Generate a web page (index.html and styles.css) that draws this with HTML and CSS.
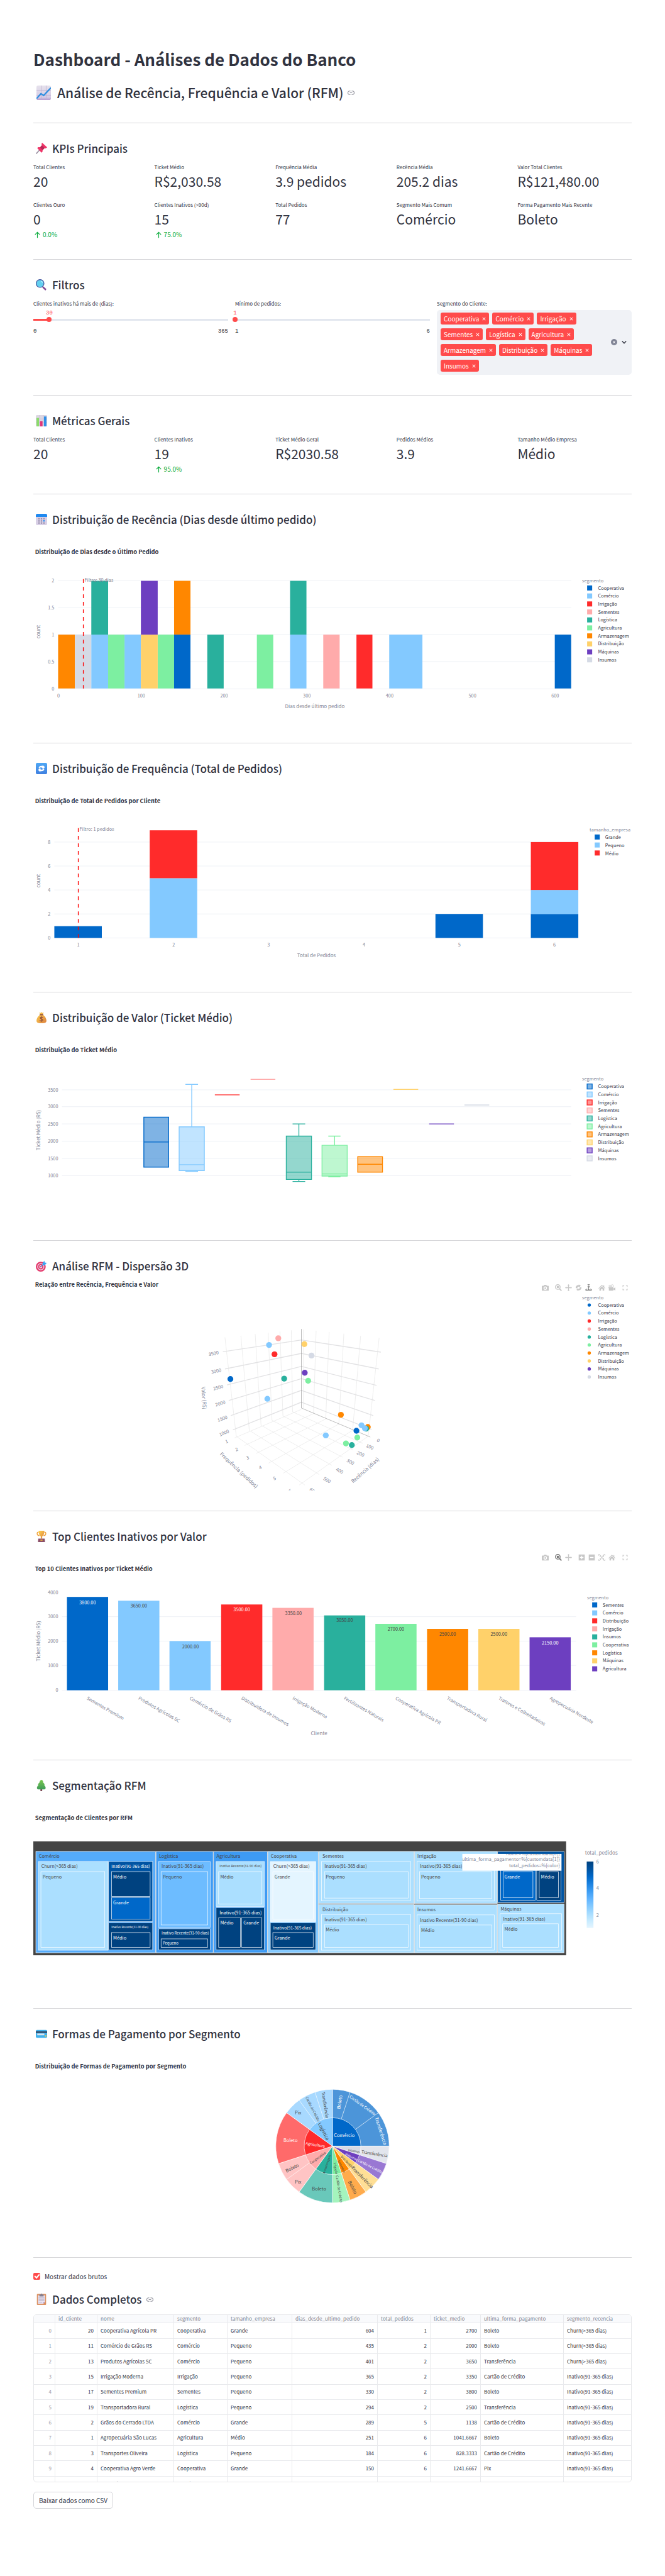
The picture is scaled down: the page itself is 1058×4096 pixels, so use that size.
FILE: index.html
```html
<!DOCTYPE html>
<html lang="pt-BR">
<head>
<meta charset="utf-8">
<meta name="viewport" content="width=device-width, initial-scale=1">
<title>Dashboard - Análises de Dados do Banco</title>
<link rel="stylesheet" href="styles.css">
</head>
<body>
<svg class="defs" aria-hidden="true">
  <defs>
    <symbol id="i-link" viewBox="0 0 24 24"><path d="M10 6H7a6 6 0 0 0 0 12h3M14 6h3a6 6 0 0 1 0 12h-3M8 12h8" fill="none" stroke="currentColor" stroke-width="2.4"/></symbol>
    <symbol id="i-x" viewBox="0 0 8 8"><path d="M1 1l6 6M7 1L1 7" stroke="currentColor" stroke-width="1.4" fill="none"/></symbol>
    <symbol id="i-up" viewBox="0 0 16 16"><path d="M8 15V2M2.500 7.500L8 2l5.500 5.500" stroke="currentColor" stroke-width="1.700" fill="none"/></symbol>
    <symbol id="i-camera" viewBox="0 0 16 16"><path fill-rule="evenodd" d="M1 3.500h3.500L5.500 1.500h5l1 2H15a1 1 0 0 1 1 1V14a1 1 0 0 1-1 1H1a1 1 0 0 1-1-1V4.500a1 1 0 0 1 1-1zM8 5.200a4 4 0 1 0 0 8 4 4 0 0 0 0-8zM8 7.200a2 2 0 1 1 0 4 2 2 0 0 1 0-4z" fill="currentColor"/></symbol>
    <symbol id="i-zoom" viewBox="0 0 16 16"><circle cx="6.500" cy="6.500" r="5.300" fill="none" stroke="currentColor" stroke-width="2.200"/><rect x="4.300" y="4.300" width="4.400" height="4.400" fill="currentColor"/><path d="M10.500 10.500L15 15" stroke="currentColor" stroke-width="2.800"/></symbol>
    <symbol id="i-pan" viewBox="0 0 16 16"><path d="M8 0l2.600 3H9v4h4V5.400L16 8l-3 2.600V9H9v4h1.600L8 16l-2.600-3H7V9H3v1.600L0 8l3-2.600V7h4V3H5.400z" fill="currentColor"/></symbol>
    <symbol id="i-orbit" viewBox="0 0 16 16"><path d="M1.500 9A6.500 6 0 0 1 9 2l-1-1.500L13 3 9.500 7.500 9 5.500A4 4 0 0 0 5 9.500zM14.500 7A6.500 6 0 0 1 7 14l1 1.500L3 13l3.500-4 .5 2a4 4 0 0 0 4-4z" fill="currentColor"/></symbol>
    <symbol id="i-turn" viewBox="0 0 16 16"><path d="M5.500.800h4.500L6 5h4.500M8 6v6M6.500 8L8 6.200 9.500 8" fill="none" stroke="currentColor" stroke-width="1.300"/><path d="M5 11.300c-6 .8-5 3.700 3 3.700s9-2.900 3-3.700" fill="none" stroke="currentColor" stroke-width="1.600"/><rect x="6" y="11.500" width="4" height="1.500" fill="currentColor"/></symbol>
    <symbol id="i-home" viewBox="0 0 16 16"><path d="M8 1.500L11.500 5V2.500h2V7L16 9.300l-1 1L8 3.700l-7 6.600-1-1zM8 5l5.500 5.200V15H9.800v-4H6.200v4H2.500v-4.800z" fill="currentColor"/></symbol>
    <symbol id="i-movie" viewBox="0 0 16 16"><circle cx="3.500" cy="4" r="2.200" fill="none" stroke="currentColor" stroke-width="1.200"/><circle cx="9" cy="3.800" r="2.700" fill="none" stroke="currentColor" stroke-width="1.200"/><path d="M0 7h11.500v3L15 7.500h1V14h-1l-3.500-2v3H1V9H0z" fill="currentColor"/></symbol>
    <symbol id="i-plus" viewBox="0 0 16 16"><path fill-rule="evenodd" d="M1 1h14v14H1zM7 4v3H4v2h3v3h2V9h3V7H9V4z" fill="currentColor"/></symbol>
    <symbol id="i-minus" viewBox="0 0 16 16"><path fill-rule="evenodd" d="M1 1h14v14H1zM4 7v2h8V7z" fill="currentColor"/></symbol>
    <symbol id="i-auto" viewBox="0 0 16 16"><path d="M.700 4V.700H4M12 .700h3.300V4M15.300 12v3.300H12M4 15.300H.700V12" fill="none" stroke="currentColor" stroke-width="1.200"/><path d="M3 3h3.500L5.500 4.500 8 7l2.500-2.500L9.500 3H13v3.500L11.500 5.500 9 8l2.500 2.500L13 9.500V13H9.500l1-1.500L8 9l-2.500 2.500 1 1.500H3V9.500l1.500 1L7 8 4.500 5.500 3 6.500z" fill="currentColor"/></symbol>
    <symbol id="i-full" viewBox="0 0 16 16"><path d="M3 6V3h3M10 3h3v3M13 10v3h-3M6 13H3v-3" fill="none" stroke="currentColor" stroke-width="1.600"/></symbol>
    <linearGradient id="g-paper" x1="0" y1="0" x2="0" y2="1"><stop offset="0" stop-color="#e6e2ec"/><stop offset=".8" stop-color="#d6cce6"/><stop offset="1" stop-color="#b79bd0"/></linearGradient>
    <linearGradient id="g-gold" x1="0" y1="0" x2="1" y2="1"><stop offset="0" stop-color="#ffd44f"/><stop offset="1" stop-color="#dd8140"/></linearGradient>
    <linearGradient id="g-blue" x1="0" y1="0" x2="0" y2="1"><stop offset="0" stop-color="#4fa8f5"/><stop offset="1" stop-color="#3f7fe0"/></linearGradient>
    <linearGradient id="g-tree" x1="0" y1="0" x2="0" y2="1"><stop offset="0" stop-color="#7ac84f"/><stop offset="1" stop-color="#3f9b58"/></linearGradient>
    <linearGradient id="g-scale" x1="0" y1="1" x2="0" y2="0"><stop offset="0" stop-color="#e4f5ff"/><stop offset=".110" stop-color="#c7ebff"/><stop offset=".220" stop-color="#a6dcff"/><stop offset=".330" stop-color="#83c9ff"/><stop offset=".440" stop-color="#60b4ff"/><stop offset=".550" stop-color="#3d9df3"/><stop offset=".660" stop-color="#1c83e1"/><stop offset=".770" stop-color="#0068c9"/><stop offset=".880" stop-color="#0054a3"/><stop offset="1" stop-color="#004280"/></linearGradient>
    <clipPath id="tip-clip"><rect x="1021" y="130" width="236" height="40"/></clipPath>
  </defs>
</svg>

<main class="page">
  <h1>Dashboard - Análises de Dados do Banco</h1>
  <h2 class="heading heading-lg">
    <svg class="emoji" viewBox="0 0 32 32" aria-hidden="true"><rect width="32" height="32" rx="4" fill="url(#g-paper)"/><path d="M0 10.500h32M0 21.500h32M10.500 0v32M21.500 0v32" stroke="#beb1d2" stroke-width="1"/><path d="M0 29l10-11 6 4L32 5" fill="none" stroke="#2c8de0" stroke-width="3"/></svg>
    Análise de Recência, Frequência e Valor (RFM)
    <a class="anchor" href="#rfm" aria-label="Link"><svg viewBox="0 0 24 24"><use href="#i-link"/></svg></a>
  </h2>

  <hr>
  <section>
    <h3 class="heading"><svg class="emoji" viewBox="0 0 32 32" aria-hidden="true"><path d="M11 20L1 31" stroke="#9b91a3" stroke-width="3"/><path d="M18 0l14 13-4 3-3-1-6 6c1 4-1 6-3 7L4 15c2-3 5-3 8-2l5-6-1-4z" fill="#ef3568"/><path d="M17 7l8 8-6 6-7-8z" fill="#b92a58"/></svg>KPIs Principais</h3>
    <dl class="metrics">
      <div><dt>Total Clientes</dt><dd>20</dd></div>
      <div><dt>Ticket Médio</dt><dd>R$2,030.58</dd></div>
      <div><dt>Frequência Média</dt><dd>3.9 pedidos</dd></div>
      <div><dt>Recência Média</dt><dd>205.2 dias</dd></div>
      <div><dt>Valor Total Clientes</dt><dd>R$121,480.00</dd></div>
      <div><dt>Clientes Ouro</dt><dd>0</dd><dd class="delta"><svg viewBox="0 0 16 16"><use href="#i-up"/></svg>0.0%</dd></div>
      <div><dt>Clientes Inativos (&gt;90d)</dt><dd>15</dd><dd class="delta"><svg viewBox="0 0 16 16"><use href="#i-up"/></svg>75.0%</dd></div>
      <div><dt>Total Pedidos</dt><dd>77</dd></div>
      <div><dt>Segmento Mais Comum</dt><dd>Comércio</dd></div>
      <div><dt>Forma Pagamento Mais Recente</dt><dd>Boleto</dd></div>
    </dl>
  </section>

  <hr>
  <section>
    <h3 class="heading"><svg class="emoji" viewBox="0 0 32 32" aria-hidden="true"><path d="M21 20l9 8-3 4-9-9z" fill="#7d4690"/><circle cx="12" cy="12" r="11" fill="#63d0ef" stroke="#4b5fa5" stroke-width="2.400"/><path d="M14 5a8 8 0 0 1 5 5" stroke="#c3f1ff" stroke-width="2" fill="none"/></svg>Filtros</h3>
    <form class="filters">
      <div class="slider">
        <label for="dias">Clientes inativos há mais de (dias):</label>
        <output for="dias" style="--pos:8.2%">30</output>
        <input type="range" id="dias" min="0" max="365" value="30" style="--pos:8.2%">
        <div class="range-ends"><span>0</span><span>365</span></div>
      </div>
      <div class="slider">
        <label for="pedidos">Mínimo de pedidos:</label>
        <output for="pedidos" style="--pos:0%">1</output>
        <input type="range" id="pedidos" min="1" max="6" value="1" style="--pos:0%">
        <div class="range-ends"><span>1</span><span>6</span></div>
      </div>
      <div>
        <span class="label" id="seg-label">Segmento do Cliente:</span>
        <div class="multiselect" role="group" aria-labelledby="seg-label">
          <div class="tags">
            <span class="tag">Cooperativa<button type="button" aria-label="Remover Cooperativa"><svg viewBox="0 0 8 8"><use href="#i-x"/></svg></button></span>
            <span class="tag">Comércio<button type="button" aria-label="Remover Comércio"><svg viewBox="0 0 8 8"><use href="#i-x"/></svg></button></span>
            <span class="tag">Irrigação<button type="button" aria-label="Remover Irrigação"><svg viewBox="0 0 8 8"><use href="#i-x"/></svg></button></span>
            <span class="tag">Sementes<button type="button" aria-label="Remover Sementes"><svg viewBox="0 0 8 8"><use href="#i-x"/></svg></button></span>
            <span class="tag">Logística<button type="button" aria-label="Remover Logística"><svg viewBox="0 0 8 8"><use href="#i-x"/></svg></button></span>
            <span class="tag">Agricultura<button type="button" aria-label="Remover Agricultura"><svg viewBox="0 0 8 8"><use href="#i-x"/></svg></button></span>
            <span class="tag">Armazenagem<button type="button" aria-label="Remover Armazenagem"><svg viewBox="0 0 8 8"><use href="#i-x"/></svg></button></span>
            <span class="tag">Distribuição<button type="button" aria-label="Remover Distribuição"><svg viewBox="0 0 8 8"><use href="#i-x"/></svg></button></span>
            <span class="tag">Máquinas<button type="button" aria-label="Remover Máquinas"><svg viewBox="0 0 8 8"><use href="#i-x"/></svg></button></span>
            <span class="tag">Insumos<button type="button" aria-label="Remover Insumos"><svg viewBox="0 0 8 8"><use href="#i-x"/></svg></button></span>
          </div>
          <button type="button" class="icon-btn" aria-label="Limpar"><svg viewBox="0 0 14 14"><circle cx="7" cy="7" r="7" fill="#808495"/><path d="M4.500 4.500l5 5M9.500 4.500l-5 5" stroke="#fff" stroke-width="1.400"/></svg></button>
          <button type="button" class="icon-btn" aria-label="Abrir"><svg viewBox="0 0 14 14"><path d="M2.500 5L7 9.500 11.500 5" fill="none" stroke="#31333f" stroke-width="2"/></svg></button>
        </div>
      </div>
    </form>
  </section>

  <hr>
  <section>
    <h3 class="heading"><svg class="emoji" viewBox="0 0 32 32" aria-hidden="true"><rect width="32" height="32" rx="3" fill="#dcd7e2"/><path d="M0 11h32M0 21h32M11 0v32M21 0v32" stroke="#beb1d2"/><path d="M2 8h7v24H2z" fill="#8bdc6b"/><path d="M12 17h7v15h-7z" fill="#e0357a"/><path d="M23 4h7v28h-7z" fill="#2f8fe8"/></svg>Métricas Gerais</h3>
    <dl class="metrics">
      <div><dt>Total Clientes</dt><dd>20</dd></div>
      <div><dt>Clientes Inativos</dt><dd>19</dd><dd class="delta"><svg viewBox="0 0 16 16"><use href="#i-up"/></svg>95.0%</dd></div>
      <div><dt>Ticket Médio Geral</dt><dd>R$2030.58</dd></div>
      <div><dt>Pedidos Médios</dt><dd>3.9</dd></div>
      <div><dt>Tamanho Médio Empresa</dt><dd>Médio</dd></div>
    </dl>
  </section>

  <hr>
  <section>
    <h3 class="heading"><svg class="emoji" viewBox="0 0 32 32" aria-hidden="true"><rect width="32" height="32" rx="4" fill="#d9d0e6"/><path d="M0 9V4a4 4 0 0 1 4-4h24a4 4 0 0 1 4 4v5z" fill="#2089f0"/><path d="M7 14h4M14 14h4M21 14h4M7 20h4M14 20h4M7 26h4M14 26h4M21 26h4" stroke="#998fae" stroke-width="4"/><path d="M21 20h4" stroke="#2089f0" stroke-width="4"/></svg>Distribuição de Recência (Dias desde último pedido)</h3>
    <div class="chart">
      <svg viewBox="0 0 1424 450" role="img" aria-label="Distribuição de Dias desde o Último Pedido">
        <text class="c-title" x="4" y="50">Distribuição de Dias desde o Último Pedido</text>
        <path class="grid" d="M59 113H1280M59 177H1280M59 241H1280M59 305H1280M59 370H1280"/>
        <g class="tick end"><text x="50" y="117">2</text><text x="50" y="181">1.5</text><text x="50" y="245">1</text><text x="50" y="309">0.5</text><text x="50" y="374">0</text></g>
        <g class="s-arm"><rect x="59" y="241" width="40" height="128"/><rect x="335" y="113" width="39" height="128"/></g>
        <g class="s-ins"><rect x="99" y="241" width="39" height="128"/></g>
        <g class="s-com"><rect x="138" y="241" width="40" height="128"/><rect x="217" y="241" width="39" height="128"/><rect x="611" y="241" width="39" height="128"/><rect x="847" y="241" width="79" height="128"/></g>
        <g class="s-agr"><rect x="178" y="241" width="39" height="128"/><rect x="296" y="241" width="39" height="128"/><rect x="532" y="241" width="39" height="128"/></g>
        <g class="s-dis"><rect x="256" y="241" width="40" height="128"/></g>
        <g class="s-coo"><rect x="335" y="241" width="39" height="128"/><rect x="1241" y="241" width="39" height="128"/></g>
        <g class="s-log"><rect x="138" y="113" width="40" height="128"/><rect x="414" y="241" width="39" height="128"/><rect x="611" y="113" width="39" height="128"/></g>
        <g class="s-maq"><rect x="256" y="113" width="40" height="128"/></g>
        <g class="s-sem"><rect x="690" y="241" width="39" height="128"/></g>
        <g class="s-irr"><rect x="769" y="241" width="38" height="128"/></g>
        <path class="cutoff" d="M119 109V369"/>
        <text class="tick" x="122" y="115">Filtro: 30 dias</text>
        <g class="tick mid"><text x="60" y="391">0</text><text x="257" y="391">100</text><text x="454" y="391">200</text><text x="651" y="391">300</text><text x="848" y="391">400</text><text x="1045" y="391">500</text><text x="1242" y="391">600</text></g>
        <text class="axis" x="670" y="416">Dias desde último pedido</text>
        <text class="axis" transform="translate(16 234) rotate(-90)">count</text>
        <text class="tick" x="1306" y="116">segmento</text>
        <g class="legend">
          <rect class="s-coo" x="1318" y="124" width="12" height="12"/><text x="1344" y="134">Cooperativa</text>
          <rect class="s-com" x="1318" y="143" width="12" height="12"/><text x="1344" y="153">Comércio</text>
          <rect class="s-irr" x="1318" y="162" width="12" height="12"/><text x="1344" y="172">Irrigação</text>
          <rect class="s-sem" x="1318" y="181" width="12" height="12"/><text x="1344" y="191">Sementes</text>
          <rect class="s-log" x="1318" y="200" width="12" height="12"/><text x="1344" y="210">Logística</text>
          <rect class="s-agr" x="1318" y="219" width="12" height="12"/><text x="1344" y="229">Agricultura</text>
          <rect class="s-arm" x="1318" y="238" width="12" height="12"/><text x="1344" y="248">Armazenagem</text>
          <rect class="s-dis" x="1318" y="257" width="12" height="12"/><text x="1344" y="267">Distribuição</text>
          <rect class="s-maq" x="1318" y="276" width="12" height="12"/><text x="1344" y="286">Máquinas</text>
          <rect class="s-ins" x="1318" y="295" width="12" height="12"/><text x="1344" y="305">Insumos</text>
        </g>
      </svg>
    </div>
  </section>

  <hr>
  <section>
    <h3 class="heading"><svg class="emoji" viewBox="0 0 32 32" aria-hidden="true"><rect width="32" height="32" rx="4" fill="url(#g-blue)"/><path d="M8 15c0-6 6-8 11-6V6l7 6-7 6v-4c-4-2-8-1-8 1zM24 17c0 6-6 8-11 6v3l-7-6 7-6v4c4 2 8 1 8-1z" fill="#fff"/></svg>Distribuição de Frequência (Total de Pedidos)</h3>
    <div class="chart">
      <svg viewBox="0 0 1424 450" role="img" aria-label="Distribuição de Total de Pedidos por Cliente">
        <text class="c-title" x="4" y="50">Distribuição de Total de Pedidos por Cliente</text>
        <path class="grid" d="M50 142H1297M50 199H1297M50 256H1297M50 313H1297M50 370H1297"/>
        <g class="tick end"><text x="41" y="146">8</text><text x="41" y="203">6</text><text x="41" y="260">4</text><text x="41" y="317">2</text><text x="41" y="374">0</text></g>
        <g class="s-coo"><rect x="50" y="342" width="113" height="28"/><rect x="957" y="313" width="113" height="57"/><rect x="1184" y="313" width="113" height="57"/></g>
        <g class="s-com"><rect x="277" y="228" width="113" height="142"/><rect x="1184" y="256" width="113" height="57"/></g>
        <g class="s-irr"><rect x="277" y="114" width="113" height="114"/><rect x="1184" y="142" width="113" height="114"/></g>
        <path class="cutoff" d="M107 109V370"/>
        <text class="tick" x="110" y="115">Filtro: 1 pedidos</text>
        <g class="tick mid"><text x="107" y="391">1</text><text x="334" y="391">2</text><text x="560" y="391">3</text><text x="787" y="391">4</text><text x="1014" y="391">5</text><text x="1240" y="391">6</text></g>
        <text class="axis" x="674" y="416">Total de Pedidos</text>
        <text class="axis" transform="translate(16 234) rotate(-90)">count</text>
        <text class="tick" x="1324" y="116">tamanho_empresa</text>
        <g class="legend">
          <rect class="s-coo" x="1336" y="124" width="12" height="12"/><text x="1361" y="135">Grande</text>
          <rect class="s-com" x="1336" y="143" width="12" height="12"/><text x="1361" y="154">Pequeno</text>
          <rect class="s-irr" x="1336" y="162" width="12" height="12"/><text x="1361" y="173">Médio</text>
        </g>
      </svg>
    </div>
  </section>

  <hr>
  <section>
    <h3 class="heading"><svg class="emoji" viewBox="0 0 32 32" aria-hidden="true"><path d="M12 8L10 1l4 2 2-3 2 3 4-2-2 7c6 4 10 11 10 17 0 5-3 7-14 7S2 30 2 25C2 19 6 12 12 8z" fill="url(#g-gold)"/><path d="M11 8h10" stroke="#8a4a3c" stroke-width="3"/><path d="M20 16c-2-2-8-2-8 1s8 2 8 6-6 3-9 1M16 12v16" stroke="#8a4a3c" stroke-width="2" fill="none"/></svg>Distribuição de Valor (Ticket Médio)</h3>
    <div class="chart">
      <svg viewBox="0 0 1424 450" role="img" aria-label="Distribuição do Ticket Médio">
        <text class="c-title" x="4" y="50">Distribuição do Ticket Médio</text>
        <path class="grid" d="M68 139H1280M68 179H1280M68 220H1280M68 261H1280M68 302H1280M68 343H1280"/>
        <g class="tick end"><text x="59" y="143">3500</text><text x="59" y="183">3000</text><text x="59" y="224">2500</text><text x="59" y="265">2000</text><text x="59" y="306">1500</text><text x="59" y="347">1000</text></g>
        <text class="axis" transform="translate(16 235) rotate(-90)">Ticket Médio (R$)</text>
        <g class="box">
          <path class="s-coo" d="M263 204H322V323H263zM263 263H322"/>
          <path class="s-com" d="M347 227H407V331H347zM347 317H407M377 227V126M362 126H392M362 333H392"/>
          <path class="s-irr" d="M432 151H491"/>
          <path class="s-sem" d="M517 114H576"/>
          <path class="s-log" d="M602 249H662V352H602zM602 335H662M632 249V220M617 220H647M632 352V357M617 357H647"/>
          <path class="s-agr" d="M687 271H747V344H687zM687 339H747M717 271V249M702 249H731M702 346H731"/>
          <path class="s-arm" d="M772 298H831V335H772zM772 316H831"/>
          <path class="s-dis" d="M857 138H916"/>
          <path class="s-maq" d="M942 220H1001"/>
          <path class="s-ins" d="M1026 175H1085"/>
        </g>
        <text class="tick" x="1306" y="116">segmento</text>
        <g class="legend box">
          <rect class="s-coo" x="1318" y="125" width="12" height="12"/><text x="1344" y="135">Cooperativa</text>
          <rect class="s-com" x="1318" y="144" width="12" height="12"/><text x="1344" y="154">Comércio</text>
          <rect class="s-irr" x="1318" y="163" width="12" height="12"/><text x="1344" y="173">Irrigação</text>
          <rect class="s-sem" x="1318" y="182" width="12" height="12"/><text x="1344" y="192">Sementes</text>
          <rect class="s-log" x="1318" y="201" width="12" height="12"/><text x="1344" y="211">Logística</text>
          <rect class="s-agr" x="1318" y="220" width="12" height="12"/><text x="1344" y="230">Agricultura</text>
          <rect class="s-arm" x="1318" y="239" width="12" height="12"/><text x="1344" y="249">Armazenagem</text>
          <rect class="s-dis" x="1318" y="258" width="12" height="12"/><text x="1344" y="268">Distribuição</text>
          <rect class="s-maq" x="1318" y="277" width="12" height="12"/><text x="1344" y="287">Máquinas</text>
          <rect class="s-ins" x="1318" y="296" width="12" height="12"/><text x="1344" y="306">Insumos</text>
        </g>
      </svg>
    </div>
  </section>

  <hr>
  <section>
    <h3 class="heading"><svg class="emoji" viewBox="0 0 32 32" aria-hidden="true"><circle cx="14" cy="18" r="12" fill="#e8e2ee" stroke="#e5396c" stroke-width="4"/><circle cx="14" cy="18" r="6" fill="none" stroke="#e5396c" stroke-width="3.500"/><circle cx="14" cy="18" r="2" fill="#e5396c"/><path d="M14 18L25 7" stroke="#2f8be8" stroke-width="2"/><path d="M19 8l5-7 1 5 6 1-6 7h-5z" fill="#39a5f5"/></svg>Análise RFM - Dispersão 3D</h3>
    <div class="chart">
      <div class="modebar">
        <div><button type="button" aria-label="Download"><svg viewBox="0 0 16 16"><use href="#i-camera"/></svg></button></div>
        <div><button type="button" aria-label="Zoom"><svg viewBox="0 0 16 16"><use href="#i-zoom"/></svg></button><button type="button" aria-label="Pan"><svg viewBox="0 0 16 16"><use href="#i-pan"/></svg></button><button type="button" aria-label="Orbital"><svg viewBox="0 0 16 16"><use href="#i-orbit"/></svg></button><button type="button" class="on" aria-label="Turntable"><svg viewBox="0 0 16 16"><use href="#i-turn"/></svg></button></div>
        <div><button type="button" aria-label="Reset"><svg viewBox="0 0 16 16"><use href="#i-home"/></svg></button><button type="button" aria-label="Câmera"><svg viewBox="0 0 16 16"><use href="#i-movie"/></svg></button></div>
        <div><button type="button" aria-label="Tela cheia"><svg viewBox="0 0 16 16"><use href="#i-full"/></svg></button></div>
      </div>
      <svg viewBox="0 0 1424 500" role="img" aria-label="Relação entre Recência, Frequência e Valor">
        <text class="c-title" x="4" y="16">Relação entre Recência, Frequência e Valor</text>
        <path class="mesh-strong" d="M451 171L638 143L827 172M456 212L638 175L822 212M461 250L638 206L817 251M465 287L638 235L813 287M470 323L638 263L809 323M475 357L638 291L805 356"/>
        <path class="mesh" d="M456 137L483 372M494 133L514 358M528 129L542 346M559 126L568 334M587 123L594 324M614 120L617 314M643 118V306M673 121L667 318M704 124L696 330M739 128L727 344M779 133L760 358M823 138L797 372"/>
        <path class="mesh" d="M479 376L638 308M503 394L667 318M530 413L696 331M560 436L727 343M595 460L760 358M633 488L797 372M617 314L784 389M594 324L760 404M568 334L736 422M542 346L710 441M514 358L680 463M483 372L646 488"/>
        <path class="mesh-axis" d="M638 117V305L802 374"/>
        <g>
          <circle class="s-sem" cx="583" cy="139" r="7"/><circle class="s-com" cx="561" cy="155" r="7"/><circle class="s-irr" cx="574" cy="177" r="7"/><circle class="s-dis" cx="645" cy="153" r="7"/><circle class="s-ins" cx="662" cy="180" r="7"/><circle class="s-maq" cx="646" cy="221" r="7"/><circle class="s-coo" cx="469" cy="236" r="7"/><circle class="s-log" cx="597" cy="235" r="7"/><circle class="s-agr" cx="654" cy="240" r="7"/><circle class="s-com" cx="557" cy="283" r="7"/><circle class="s-arm" cx="732" cy="321" r="7"/><circle class="s-com" cx="781" cy="346" r="7"/><circle class="s-arm" cx="796" cy="350" r="7"/><circle class="s-log" cx="792" cy="354" r="7"/><circle class="s-com" cx="789" cy="353" r="7"/><circle class="s-coo" cx="769" cy="359" r="7"/><circle class="s-agr" cx="771" cy="375" r="7"/><circle class="s-com" cx="696" cy="370" r="7"/><circle class="s-agr" cx="744" cy="389" r="7"/><circle class="s-log" cx="758" cy="393" r="7"/>
        </g>
        <g class="tick mid">
          <text transform="translate(429 175) rotate(-11)" y="4">3500</text><text transform="translate(435 217) rotate(-13)" y="4">3000</text><text transform="translate(440 256) rotate(-15)" y="4">2500</text><text transform="translate(445 294) rotate(-18)" y="4">2000</text><text transform="translate(450 330) rotate(-20)" y="4">1500</text><text transform="translate(454 364) rotate(-22)" y="4">1000</text>
          <text transform="translate(460 384) rotate(-20)" y="4">1</text><text transform="translate(484 403) rotate(-20)" y="4">2</text><text transform="translate(510 423) rotate(-20)" y="4">3</text><text transform="translate(540 446) rotate(-20)" y="4">4</text><text transform="translate(574 472) rotate(-20)" y="4">5</text><text transform="translate(611 502) rotate(-20)" y="4">6</text>
          <text transform="translate(821 382) rotate(22)" y="4">0</text><text transform="translate(801 397) rotate(23)" y="4">100</text><text transform="translate(779 414) rotate(25)" y="4">200</text><text transform="translate(755 433) rotate(27)" y="4">300</text><text transform="translate(729 454) rotate(29)" y="4">400</text><text transform="translate(699 476) rotate(31)" y="4">500</text><text transform="translate(666 502) rotate(33)" y="4">600</text>
        </g>
        <text class="axis" transform="translate(406 281) rotate(86)" y="4">Valor (R$)</text>
        <text class="axis" transform="translate(489 453) rotate(43)" y="4">Frequência (pedidos)</text>
        <text class="axis" transform="translate(790 453) rotate(-42)" y="4">Recência (dias)</text>
        <text class="tick" x="1306" y="46">segmento</text>
        <g class="legend">
          <circle class="s-coo" cx="1323" cy="60" r="4"/><text x="1344" y="64">Cooperativa</text>
          <circle class="s-com" cx="1323" cy="79" r="4"/><text x="1344" y="83">Comércio</text>
          <circle class="s-irr" cx="1323" cy="98" r="4"/><text x="1344" y="102">Irrigação</text>
          <circle class="s-sem" cx="1323" cy="117" r="4"/><text x="1344" y="121">Sementes</text>
          <circle class="s-log" cx="1323" cy="136" r="4"/><text x="1344" y="140">Logística</text>
          <circle class="s-agr" cx="1323" cy="155" r="4"/><text x="1344" y="159">Agricultura</text>
          <circle class="s-arm" cx="1323" cy="174" r="4"/><text x="1344" y="178">Armazenagem</text>
          <circle class="s-dis" cx="1323" cy="193" r="4"/><text x="1344" y="197">Distribuição</text>
          <circle class="s-maq" cx="1323" cy="212" r="4"/><text x="1344" y="216">Máquinas</text>
          <circle class="s-ins" cx="1323" cy="231" r="4"/><text x="1344" y="235">Insumos</text>
        </g>
      </svg>
    </div>
  </section>

  <hr>
  <section>
    <h3 class="heading"><svg class="emoji" viewBox="0 0 32 32" aria-hidden="true"><path d="M8 4C2 3 2 13 10 14M24 4c6-1 6 9-2 10" fill="none" stroke="#f0a33c" stroke-width="2.500"/><path d="M8 0h16c0 9-2 14-6 16v6h-4v-6C10 14 8 9 8 0z" fill="url(#g-gold)"/><path d="M7 22h18l1 10H6z" fill="#8b4f68"/><path d="M13 25h6v3h-6z" fill="#f2b33f"/></svg>Top Clientes Inativos por Valor</h3>
    <div class="chart">
      <div class="modebar">
        <div><button type="button" aria-label="Download"><svg viewBox="0 0 16 16"><use href="#i-camera"/></svg></button></div>
        <div><button type="button" class="on" aria-label="Zoom"><svg viewBox="0 0 16 16"><use href="#i-zoom"/></svg></button><button type="button" aria-label="Pan"><svg viewBox="0 0 16 16"><use href="#i-pan"/></svg></button></div>
        <div><button type="button" aria-label="Ampliar"><svg viewBox="0 0 16 16"><use href="#i-plus"/></svg></button><button type="button" aria-label="Reduzir"><svg viewBox="0 0 16 16"><use href="#i-minus"/></svg></button><button type="button" aria-label="Autoescala"><svg viewBox="0 0 16 16"><use href="#i-auto"/></svg></button><button type="button" aria-label="Reset"><svg viewBox="0 0 16 16"><use href="#i-home"/></svg></button></div>
        <div><button type="button" aria-label="Tela cheia"><svg viewBox="0 0 16 16"><use href="#i-full"/></svg></button></div>
      </div>
      <svg viewBox="0 0 1424 450" role="img" aria-label="Top 10 Clientes Inativos por Ticket Médio">
        <text class="c-title" x="4" y="50">Top 10 Clientes Inativos por Ticket Médio</text>
        <path class="grid" d="M68 158H1292M68 216H1292M68 274H1292M68 333H1292"/>
        <g class="tick end"><text x="59" y="104">4000</text><text x="59" y="162">3000</text><text x="59" y="220">2000</text><text x="59" y="278">1000</text><text x="59" y="337">0</text></g>
        <rect class="s-coo" x="80" y="111" width="98" height="222"/><rect class="s-com" x="202" y="120" width="98" height="213"/><rect class="s-com" x="324" y="216" width="98" height="117"/><rect class="s-irr" x="447" y="129" width="98" height="204"/><rect class="s-sem" x="569" y="137" width="98" height="196"/><rect class="s-log" x="692" y="155" width="98" height="178"/><rect class="s-agr" x="814" y="175" width="98" height="158"/><rect class="s-arm" x="937" y="187" width="98" height="146"/><rect class="s-dis" x="1059" y="187" width="98" height="146"/><rect class="s-maq" x="1181" y="207" width="98" height="126"/>
        <g class="value"><text class="light" x="129" y="128">3800.00</text><text x="251" y="136">3650.00</text><text x="374" y="233">2000.00</text><text class="light" x="496" y="145">3500.00</text><text x="619" y="154">3350.00</text><text x="741" y="171">3050.00</text><text x="863" y="192">2700.00</text><text x="986" y="203">2500.00</text><text x="1108" y="203">2500.00</text><text class="light" x="1230" y="224">2150.00</text></g>
        <g class="tick">
          <text transform="translate(126 354) rotate(30)">Sementes Premium</text><text transform="translate(249 354) rotate(30)">Produtos Agrícolas SC</text><text transform="translate(371 354) rotate(30)">Comércio de Grãos RS</text><text transform="translate(494 354) rotate(30)">Distribuidora de Insumos</text><text transform="translate(616 354) rotate(30)">Irrigação Moderna</text><text transform="translate(738 354) rotate(30)">Fertilizantes Naturais</text><text transform="translate(861 354) rotate(30)">Cooperativa Agrícola PR</text><text transform="translate(983 354) rotate(30)">Transportadora Rural</text><text transform="translate(1106 354) rotate(30)">Tratores e Colheitadeiras</text><text transform="translate(1228 354) rotate(30)">Agropecuária Nordeste</text>
        </g>
        <text class="axis" x="680" y="440">Cliente</text>
        <text class="axis" transform="translate(16 216) rotate(-90)">Ticket Médio (R$)</text>
        <text class="tick" x="1318" y="116">segmento</text>
        <g class="legend">
          <rect class="s-coo" x="1330" y="124" width="12" height="12"/><text x="1355" y="134">Sementes</text>
          <rect class="s-com" x="1330" y="143" width="12" height="12"/><text x="1355" y="153">Comércio</text>
          <rect class="s-irr" x="1330" y="162" width="12" height="12"/><text x="1355" y="172">Distribuição</text>
          <rect class="s-sem" x="1330" y="181" width="12" height="12"/><text x="1355" y="191">Irrigação</text>
          <rect class="s-log" x="1330" y="200" width="12" height="12"/><text x="1355" y="210">Insumos</text>
          <rect class="s-agr" x="1330" y="219" width="12" height="12"/><text x="1355" y="229">Cooperativa</text>
          <rect class="s-arm" x="1330" y="238" width="12" height="12"/><text x="1355" y="248">Logística</text>
          <rect class="s-dis" x="1330" y="257" width="12" height="12"/><text x="1355" y="267">Máquinas</text>
          <rect class="s-maq" x="1330" y="276" width="12" height="12"/><text x="1355" y="286">Agricultura</text>
        </g>
      </svg>
    </div>
  </section>

  <hr>
  <section>
    <h3 class="heading"><svg class="emoji" viewBox="0 0 32 32" aria-hidden="true"><path d="M13 25h5v7h-5z" fill="#7c4a55"/><path d="M16 0c3 0 5 4 5 8 4 3 4 6 3 8 5 3 5 11 0 11H7c-5 0-5-8 0-11-1-2-1-5 3-8 1-4 3-8 6-8z" fill="url(#g-tree)"/></svg>Segmentação RFM</h3>
    <div class="chart">
      <svg viewBox="0 0 1424 450" role="img" aria-label="Segmentação de Clientes por RFM">
        <text class="c-title" x="4" y="50">Segmentação de Clientes por RFM</text>
        <rect x="0" y="100" width="1268" height="271" fill="#444"/>
        <g class="tree">
          <rect class="t5" x="6" y="124" width="285" height="241"/><rect class="t6" x="292" y="124" width="136" height="241"/><rect class="t6" x="429" y="124" width="128" height="241"/><rect class="t4" x="558" y="124" width="120" height="241"/><rect class="t3" x="679" y="124" width="227" height="124"/><rect class="t3" x="907" y="124" width="197" height="124"/><rect class="t9" x="1105" y="124" width="158" height="122"/><rect class="t3" x="679" y="250" width="227" height="115"/><rect class="t3" x="907" y="251" width="197" height="114"/><rect class="t3" x="1105" y="249" width="158" height="116"/>
          <rect class="t3" x="12" y="148" width="166" height="211"/><rect class="t3" x="18" y="172" width="152" height="180"/>
          <rect class="t9" x="179" y="148" width="105" height="143"/><rect class="t10" x="186" y="172" width="92" height="59"/><rect class="t8" x="186" y="234" width="92" height="51"/>
          <rect class="t10" x="179" y="294" width="105" height="64"/><rect class="t10" x="186" y="317" width="92" height="35"/>
          <rect class="t45" x="298" y="148" width="123" height="157"/><rect class="t45" x="304" y="172" width="111" height="127"/><rect class="t10" x="298" y="308" width="123" height="50"/><rect class="t10" x="304" y="332" width="111" height="20"/>
          <rect class="t3" x="435" y="148" width="115" height="107"/><rect class="t3" x="441" y="172" width="103" height="77"/><rect class="t10" x="435" y="258" width="115" height="100"/><rect class="t10" x="441" y="282" width="52" height="70"/><rect class="t10" x="496" y="282" width="48" height="70"/>
          <rect class="t1" x="564" y="148" width="108" height="143"/><rect class="t1" x="570" y="172" width="96" height="113"/><rect class="t10" x="564" y="294" width="108" height="64"/><rect class="t10" x="570" y="317" width="96" height="35"/>
          <rect class="t3" x="686" y="148" width="212" height="93"/><rect class="t3" x="693" y="172" width="199" height="63"/><rect class="t3" x="686" y="274" width="212" height="85"/><rect class="t3" x="693" y="298" width="199" height="54"/>
          <rect class="t3" x="913" y="148" width="184" height="94"/><rect class="t3" x="919" y="172" width="172" height="64"/><rect class="t3" x="913" y="275" width="184" height="84"/><rect class="t3" x="919" y="299" width="172" height="53"/>
          <rect class="t8" x="1112" y="148" width="83" height="92"/><rect class="t8" x="1118" y="172" width="71" height="62"/><rect class="t10" x="1198" y="148" width="58" height="92"/><rect class="t10" x="1204" y="172" width="46" height="62"/><rect class="t3" x="1111" y="272" width="146" height="87"/><rect class="t3" x="1117" y="296" width="133" height="56"/>
        </g>
        <g class="cell">
          <text x="13" y="139">Comércio</text><text x="19" y="163">Churn(&gt;365 dias)</text><text x="22" y="188">Pequeno</text>
          <g class="light"><text class="lg" x="186" y="163">Inativo(91-365 dias)</text><text x="190" y="188">Médio</text><text x="190" y="250">Grande</text><text class="xs" x="186" y="306">Inativo Recente(31-90 dias)</text><text x="190" y="333">Médio</text></g>
          <text x="299" y="139">Logística</text><text x="305" y="163">Inativo(91-365 dias)</text><text x="308" y="188">Pequeno</text>
          <g class="light"><text class="md" x="305" y="322">Inativo Recente(31-90 dias)</text><text class="md" x="308" y="346">Pequeno</text></g>
          <text x="436" y="139">Agricultura</text><text class="sm" x="443" y="161">Inativo Recente(31-90 dias)</text><text x="445" y="188">Médio</text>
          <g class="light"><text x="443" y="274">Inativo(91-365 dias)</text><text x="445" y="298">Médio</text><text x="500" y="298">Grande</text></g>
          <text x="565" y="139">Cooperativa</text><text x="571" y="163">Churn(&gt;365 dias)</text><text x="574" y="188">Grande</text>
          <g class="light"><text class="lg" x="571" y="309">Inativo(91-365 dias)</text><text x="574" y="333">Grande</text></g>
          <text x="688" y="139">Sementes</text><text x="693" y="163">Inativo(91-365 dias)</text><text x="696" y="188">Pequeno</text>
          <text x="688" y="266">Distribuição</text><text x="693" y="290">Inativo(91-365 dias)</text><text x="696" y="314">Médio</text>
          <text x="914" y="139">Irrigação</text><text x="920" y="163">Inativo(91-365 dias)</text><text x="923" y="188">Pequeno</text>
          <text x="914" y="267">Insumos</text><text x="920" y="291">Inativo Recente(31-90 dias)</text><text x="923" y="315">Médio</text>
          <g class="light"><text x="1121" y="188">Grande</text><text x="1208" y="188">Médio</text></g>
          <text x="1112" y="265">Máquinas</text><text x="1118" y="289">Inativo(91-365 dias)</text><text x="1121" y="313">Médio</text>
        </g>
        <rect x="1021" y="130" width="236" height="40" fill="#fff"/>
        <g class="tick end tip" clip-path="url(#tip-clip)"><text x="1253" y="133">nome=%{customdata[0]}</text><text x="1253" y="147">ultima_forma_pagamento=%{customdata[1]}</text><text x="1253" y="162">total_pedidos=%{color}</text></g>
        <text class="axis start" x="1313" y="132">total_pedidos</text>
        <rect x="1317" y="148" width="16" height="158" fill="url(#g-scale)"/>
        <g class="tick"><text x="1340" y="153">6</text><text x="1340" y="216">4</text><text x="1340" y="279">2</text></g>
      </svg>
    </div>
  </section>

  <hr>
  <section>
    <h3 class="heading"><svg class="emoji" viewBox="0 0 32 32" aria-hidden="true"><rect y="5" width="32" height="22" rx="3" fill="#3fb1ec"/><path d="M0 9h32v4H0z" fill="#32405a"/><path d="M4 15h20v5H4z" fill="#dde4ee"/><path d="M26 20h4v4h-4z" fill="#f2c94a"/></svg>Formas de Pagamento por Segmento</h3>
    <div class="chart">
      <svg viewBox="0 0 1424 450" role="img" aria-label="Distribuição de Formas de Pagamento por Segmento">
        <text class="c-title" x="4" y="50">Distribuição de Formas de Pagamento por Segmento</text>
        <g class="sunburst" transform="translate(712 234)">
          <g class="leaf">
            <path class="s-coo" d="M0 0V-135A135 135 0 0 1 135 0z"/>
            <path class="s-ins" d="M0 0H135A135 135 0 0 1 128.400 41.700z"/>
            <path class="s-maq" d="M0 0L128.400 41.700A135 135 0 0 1 109.200 79.400z"/>
            <path class="s-dis" d="M0 0L109.200 79.400A135 135 0 0 1 79.400 109.200z"/>
            <path class="s-arm" d="M0 0L79.400 109.200A135 135 0 0 1 41.700 128.400z"/>
            <path class="s-agr" d="M0 0L41.700 128.400A135 135 0 0 1 0 135z"/>
            <path class="s-log" d="M0 0V135A135 135 0 0 1 -79.400 109.200z"/>
            <path class="s-sem" d="M0 0L-79.400 109.200A135 135 0 0 1 -128.400 41.700z"/>
            <path class="s-irr" d="M0 0L-128.400 41.700A135 135 0 0 1 -109.200 -79.400z"/>
            <path class="s-com" d="M0 0L-109.200 -79.400A135 135 0 0 1 0 -135z"/>
          </g>
          <path class="ray" d="M0 0L41.700 -128.400M0 0L109.200 -79.400M0 0L-109.200 79.400M0 0L-79.400 -109.200M0 0L-41.700 -128.400"/>
          <g class="core">
            <path class="s-coo" d="M0 0V-67.500A67.500 67.500 0 0 1 67.500 0z"/>
            <path class="s-ins" d="M0 0H67.500A67.500 67.500 0 0 1 64.200 20.900z"/>
            <path class="s-maq" d="M0 0L64.200 20.900A67.500 67.500 0 0 1 54.600 39.700z"/>
            <path class="s-dis" d="M0 0L54.600 39.700A67.500 67.500 0 0 1 39.700 54.600z"/>
            <path class="s-arm" d="M0 0L39.700 54.600A67.500 67.500 0 0 1 20.900 64.200z"/>
            <path class="s-agr" d="M0 0L20.900 64.200A67.500 67.500 0 0 1 0 67.500z"/>
            <path class="s-log" d="M0 0V67.500A67.500 67.500 0 0 1 -39.700 54.600z"/>
            <path class="s-sem" d="M0 0L-39.700 54.600A67.500 67.500 0 0 1 -64.200 20.900z"/>
            <path class="s-irr" d="M0 0L-64.200 20.900A67.500 67.500 0 0 1 -54.600 -39.700z"/>
            <path class="s-com" d="M0 0L-54.600 -39.700A67.500 67.500 0 0 1 0 -67.500z"/>
          </g>
          <g class="cell mid">
            <text class="light" transform="translate(28 -25)" y="4">Comércio</text>
            <text class="light" transform="translate(17 -105) rotate(-81)" y="4">Boleto</text>
            <text class="md light" transform="translate(71 -97) rotate(36)" y="3">Cartão de Crédito</text>
            <text class="light" transform="translate(115 -36) rotate(72)" y="4">Transferência</text>
            <text class="xs" transform="translate(51 11) rotate(9)" y="3">Insumos</text>
            <text class="lg" transform="translate(100 18) rotate(9)" y="4">Transferência</text>
            <text class="xs light" transform="translate(45 25) rotate(27)" y="3">Máquinas</text>
            <text class="sm light" transform="translate(90 48) rotate(27)" y="3">Cartão de Crédito</text>
            <text class="xs" transform="translate(35 37) rotate(45)" y="3">Distribuição</text>
            <text transform="translate(71 74) rotate(45)" y="4">Transferência</text>
            <text class="xs" transform="translate(22 48) rotate(63)" y="3">Sementes</text>
            <text transform="translate(48 98) rotate(63)" y="4">Boleto</text>
            <text class="xs" transform="translate(8 53) rotate(81)" y="3">Irrigação</text>
            <text class="sm" transform="translate(16 102) rotate(81)" y="3">Cartão de Crédito</text>
            <text class="xs" transform="translate(-14 43) rotate(-72)" y="3">Armazenagem</text>
            <text transform="translate(-32 101)" y="4">Boleto</text>
            <text class="sm" transform="translate(-35 28) rotate(-36)" y="3">Cooperativa</text>
            <text transform="translate(-96 52) rotate(-27)" y="4">Boleto</text>
            <text transform="translate(-82 85)" y="4">Pix</text>
            <text class="md light" transform="translate(-41 -3) rotate(9)" y="3">Agricultura</text>
            <text class="light" transform="translate(-100 -13)" y="4">Boleto</text>
            <text transform="translate(-21 -35) rotate(63)" y="4">Logística</text>
            <text transform="translate(-82 -80)" y="4">Pix</text>
            <text class="sm" transform="translate(-47 -88) rotate(63)" y="3">Cartão de Crédito</text>
            <text class="lg" transform="translate(-17 -98) rotate(81)" y="4">Transferência</text>
          </g>
        </g>
      </svg>
    </div>
  </section>

  <hr>
  <section class="raw">
    <label class="check"><input type="checkbox" checked>Mostrar dados brutos</label>
    <h3 class="heading"><svg class="emoji" viewBox="0 0 32 32" aria-hidden="true"><rect x="3" y="1" width="26" height="31" rx="2" fill="#dd9262"/><path d="M6 5h20v18l-5 6H6z" fill="#e9e3f2"/><path d="M26 23l-5 6v-6z" fill="#b9a5cf"/><rect x="10" y="2" width="12" height="6" rx="1" fill="#85808f"/><circle cx="16" cy="2" r="2" fill="#85808f"/><path d="M8 12h16M8 16h16M8 20h16M8 24h10" stroke="#a69cb4" stroke-width="1.500"/></svg>Dados Completos <a class="anchor" href="#dados" aria-label="Link"><svg viewBox="0 0 24 24"><use href="#i-link"/></svg></a></h3>
    <div class="table-wrap">
      <table>
        <colgroup><col class="w-idx"><col class="w-id"><col class="w-nome"><col class="w-seg"><col class="w-tam"><col class="w-dias"><col class="w-tot"><col class="w-tic"><col class="w-forma"><col></colgroup>
        <thead><tr><th></th><th>id_cliente</th><th>nome</th><th>segmento</th><th>tamanho_empresa</th><th>dias_desde_ultimo_pedido</th><th>total_pedidos</th><th>ticket_medio</th><th>ultima_forma_pagamento</th><th>segmento_recencia</th></tr></thead>
        <tbody>
          <tr><td class="idx">0</td><td class="num">20</td><td>Cooperativa Agrícola PR</td><td>Cooperativa</td><td>Grande</td><td class="num">604</td><td class="num">1</td><td class="num">2700</td><td>Boleto</td><td>Churn(&gt;365 dias)</td></tr>
          <tr><td class="idx">1</td><td class="num">11</td><td>Comércio de Grãos RS</td><td>Comércio</td><td>Pequeno</td><td class="num">435</td><td class="num">2</td><td class="num">2000</td><td>Boleto</td><td>Churn(&gt;365 dias)</td></tr>
          <tr><td class="idx">2</td><td class="num">13</td><td>Produtos Agrícolas SC</td><td>Comércio</td><td>Pequeno</td><td class="num">401</td><td class="num">2</td><td class="num">3650</td><td>Transferência</td><td>Churn(&gt;365 dias)</td></tr>
          <tr><td class="idx">3</td><td class="num">15</td><td>Irrigação Moderna</td><td>Irrigação</td><td>Pequeno</td><td class="num">365</td><td class="num">2</td><td class="num">3350</td><td>Cartão de Crédito</td><td>Inativo(91-365 dias)</td></tr>
          <tr><td class="idx">4</td><td class="num">17</td><td>Sementes Premium</td><td>Sementes</td><td>Pequeno</td><td class="num">330</td><td class="num">2</td><td class="num">3800</td><td>Boleto</td><td>Inativo(91-365 dias)</td></tr>
          <tr><td class="idx">5</td><td class="num">19</td><td>Transportadora Rural</td><td>Logística</td><td>Pequeno</td><td class="num">294</td><td class="num">2</td><td class="num">2500</td><td>Transferência</td><td>Inativo(91-365 dias)</td></tr>
          <tr><td class="idx">6</td><td class="num">2</td><td>Grãos do Cerrado LTDA</td><td>Comércio</td><td>Grande</td><td class="num">289</td><td class="num">5</td><td class="num">1138</td><td>Cartão de Crédito</td><td>Inativo(91-365 dias)</td></tr>
          <tr><td class="idx">7</td><td class="num">1</td><td>Agropecuária São Lucas</td><td>Agricultura</td><td>Médio</td><td class="num">251</td><td class="num">6</td><td class="num">1041.6667</td><td>Boleto</td><td>Inativo(91-365 dias)</td></tr>
          <tr><td class="idx">8</td><td class="num">3</td><td>Transportes Oliveira</td><td>Logística</td><td>Pequeno</td><td class="num">184</td><td class="num">6</td><td class="num">828.3333</td><td>Cartão de Crédito</td><td>Inativo(91-365 dias)</td></tr>
          <tr><td class="idx">9</td><td class="num">4</td><td>Cooperativa Agro Verde</td><td>Cooperativa</td><td>Grande</td><td class="num">150</td><td class="num">6</td><td class="num">1241.6667</td><td>Pix</td><td>Inativo(91-365 dias)</td></tr>
          <tr><td></td><td></td><td>Armazéns Gerais</td><td>Comércio</td><td>Grande</td><td></td><td></td><td></td><td>Boleto</td><td>Inativo(91-365 dias)</td></tr>
        </tbody>
      </table>
    </div>
    <button type="button" class="download">Baixar dados como CSV</button>
  </section>
</main>
</body>
</html>
```
FILE: styles.css
```css
* { box-sizing: border-box; }

body {
  margin: 0;
  background: #fff;
  color: #31333f;
  font-family: "Noto Sans CJK SC", "Noto Sans", sans-serif;
  font-size: 10px;
  line-height: 14px;
}

.defs { position: absolute; width: 0; height: 0; }

.page { padding: 78px 53px 107px; }

h1 { margin: 0 0 24px; font-size: 26px; line-height: 31px; font-weight: 700; }

hr { height: 1px; margin: 32px 0 29px; border: 0; background: #d6d6d9; }

.heading {
  display: flex;
  align-items: center;
  gap: 8px;
  margin: 0 0 13px;
  padding-left: 4px;
  font-size: 17px;
  line-height: 22px;
  font-weight: 500;
}
.heading-lg { gap: 10px; margin: 0 0 33px; padding-left: 5px; font-size: 21px; line-height: 29px; }
.emoji { width: 18px; height: 18px; flex: none; }
.heading-lg .emoji { width: 23px; height: 23px; }
.anchor { display: flex; color: #8f909b; }
.anchor svg { width: 11px; height: 11px; }
.heading-lg .anchor { margin-left: -3px; }

/* metrics */
.metrics { display: grid; grid-template-columns: repeat(5, 1fr); gap: 20px 11px; margin: 0; }
.metrics dt, .filters label, .filters .label { display: block; margin-bottom: 4px; font-size: 8px; line-height: 12px; }
.metrics dd { margin: 0; font-size: 21px; line-height: 24px; }
.metrics .delta { display: flex; align-items: center; gap: 3px; margin-top: 6px; padding-left: 1px; color: #09ab3b; font-size: 10px; line-height: 14px; }
.delta svg { width: 11px; height: 11px; }

/* filters */
.filters { display: grid; grid-template-columns: repeat(3, 1fr); gap: 11px; }
.slider output, .range-ends { font-family: "Liberation Mono", monospace; font-size: 9px; line-height: 10px; }
.slider output { display: block; width: max-content; margin-left: var(--pos); transform: translateX(-50%); color: #ff4b4b; }
.slider input {
  appearance: none;
  display: block;
  width: calc(100% + 8px);
  height: 8px;
  margin: 1px -4px 10px;
  background: linear-gradient(to right, #ff4b4b var(--pos), #e3e7ef var(--pos)) center / calc(100% - 8px) 3px no-repeat;
}
.slider input::-webkit-slider-thumb { appearance: none; width: 8px; height: 8px; border-radius: 50%; background: #ff4b4b; }
.range-ends { display: flex; justify-content: space-between; }
.multiselect { display: flex; align-items: center; padding: 4px 7px 5px 6px; border-radius: 5px; background: #f0f2f6; }
.tags { display: flex; flex: 1; flex-wrap: wrap; gap: 6px 5px; }
.tag { display: flex; align-items: center; gap: 5px; height: 19px; padding: 0 5px; border-radius: 3px; background: #ff4b4b; color: #fff; }
.tag button, .icon-btn { display: flex; padding: 0; border: 0; background: none; color: inherit; }
.tag svg { width: 6px; height: 6px; }
.icon-btn { margin-left: 6px; }
.icon-btn svg { width: 10px; height: 10px; }

/* charts */
.chart { position: relative; margin-top: -2px; }
.chart > svg { display: block; width: 100%; height: auto; }
.modebar { position: absolute; top: 5px; right: 3px; display: flex; gap: 5px; color: #c7c7c7; }
.modebar div { display: flex; }
.modebar button { display: flex; justify-content: center; align-items: center; width: 16px; height: 14px; padding: 0; border: 0; background: none; color: inherit; }
.modebar .on { color: #7a7a7a; }
.modebar svg { width: 11px; height: 11px; }

.c-title { font-size: 14px; font-weight: 700; fill: #31333f; }
.tick { font-size: 11px; fill: #808495; }
.axis { font-size: 12px; fill: #808495; text-anchor: middle; }
.start { text-anchor: start; }
.end { text-anchor: end; }
.mid { text-anchor: middle; }
.legend text { font-size: 11px; fill: #31333f; }
.grid { stroke: #e6eaf1; stroke-width: 1; fill: none; }
.cutoff { stroke: #f00; stroke-width: 2; stroke-dasharray: 9 9; }
.value { font-size: 11px; fill: #444; text-anchor: middle; }
.value .light { fill: #fff; }

.s-coo { fill: #0068c9; stroke: #0068c9; }
.s-com { fill: #83c9ff; stroke: #83c9ff; }
.s-irr { fill: #ff2b2b; stroke: #ff2b2b; }
.s-sem { fill: #ffabab; stroke: #ffabab; }
.s-log { fill: #29b09d; stroke: #29b09d; }
.s-agr { fill: #7defa1; stroke: #7defa1; }
.s-arm { fill: #ff8700; stroke: #ff8700; }
.s-dis { fill: #ffd16a; stroke: #ffd16a; }
.s-maq { fill: #6d3fc0; stroke: #6d3fc0; }
.s-ins { fill: #d5dae5; stroke: #d5dae5; }
.chart rect, .chart circle { stroke-width: 0; }
.chart .box path, .chart .box rect { stroke-width: 2; fill-opacity: .5; }

.mesh, .mesh-strong, .mesh-axis { fill: none; stroke: #e5e5e5; stroke-width: 1; }
.mesh-strong { stroke: #e2e2e4; stroke-width: 2; }
.mesh-axis { stroke: #999; }

.chart .tree rect { stroke: #fff; stroke-width: 1; }
.t1 { fill: #e4f5ff; }
.t3 { fill: #abdfff; }
.t4 { fill: #83c9ff; }
.t45 { fill: #6dbcff; }
.t5 { fill: #54abfb; }
.t6 { fill: #3d9af3; }
.t8 { fill: #0068c9; }
.t9 { fill: #0054a3; }
.t10 { fill: #004280; }
.cell { font-size: 11px; fill: #444; }
.cell .light, .cell .light text { fill: #fff; }
.cell .lg { font-size: 10px; }
.cell .md { font-size: 9px; }
.cell .sm { font-size: 8px; }
.cell .xs { font-size: 7px; }

.chart .sunburst .leaf path, .chart .sunburst .core path, .ray { stroke: #fff; stroke-width: 1; }
.leaf path { fill-opacity: .7; }

/* raw data */
.raw { margin-top: -5px; }
.check { display: flex; align-items: center; gap: 7px; height: 11px; margin-bottom: 20px; }
.check input {
  appearance: none;
  width: 11px;
  height: 11px;
  margin: 0;
  border-radius: 2px;
  background: #ff4b4b;
  display: grid;
  place-items: center;
}
.check input::after { content: ""; width: 6px; height: 3px; margin-top: -2px; border: solid #fff; border-width: 0 0 2px 2px; transform: rotate(-48deg); }
.table-wrap { height: 267px; overflow: hidden; border: 1px solid #e6e7ea; border-radius: 5px; }
table { width: 100%; height: 281px; table-layout: fixed; border-collapse: separate; border-spacing: 0; font-size: 8px; line-height: 12px; }
th, td { padding: 0 5px; border-right: 1px solid #e9eaed; border-bottom: 1px solid #e9eaed; text-align: left; font-weight: 400; white-space: nowrap; }
th { background: #f9fafc; color: #808491; }
th:last-child, td:last-child { border-right: 0; }
.num, .idx { text-align: right; }
.idx { color: #9a9eac; }
.w-idx { width: 34px; }
.w-id { width: 67px; }
.w-nome { width: 122px; }
.w-seg { width: 85px; }
.w-tam { width: 103px; }
.w-dias { width: 136px; }
.w-tot { width: 84px; }
.w-tic { width: 80px; }
.w-forma { width: 132px; }
.download { display: block; height: 27px; margin-top: 15px; padding: 0 8px; border: 1px solid #d5d6da; border-radius: 5px; background: #fff; color: inherit; font: inherit; }
```
